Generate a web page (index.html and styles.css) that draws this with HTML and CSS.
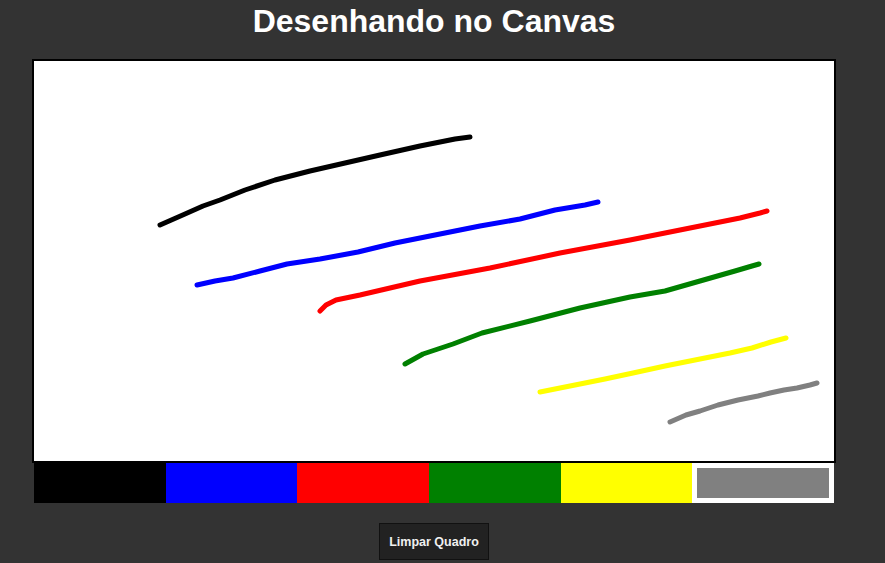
FILE: index.html
```html
<!DOCTYPE html>
<html lang="pt">
<head>
<meta charset="utf-8">
<title>Desenhando no Canvas</title>
<link rel="stylesheet" href="styles.css">
</head>
<body>
<div class="page">
  <h1 class="title">Desenhando no Canvas</h1>
  <div class="board">
    <svg class="drawing" width="800" height="400" viewBox="34 61 800 400">
      <g fill="none" stroke-width="5" stroke-linecap="round" stroke-linejoin="round">
        <polyline stroke="#000000" points="160,225 185,214 203,206 220,200 245,190 275,180 310,171 345,163 380,155 420,146 455,139 470,137"/>
        <polyline stroke="#0000ff" points="197,285 215,281 233,278 260,271 287,264 320,259 358,252 395,243 430,236 460,230 480,226 520,219 555,210 585,205 598,202"/>
        <polyline stroke="#ff0000" points="320,311 326,305 336,300 360,295 420,281 490,268 560,253 630,240 680,230 740,218 760,213 767,211"/>
        <polyline stroke="#008000" points="405,364 423,354 453,344 482,333 530,321 580,308 630,297 665,291 700,281 735,271 752,266 759,264"/>
        <polyline stroke="#ffff00" points="540,392 575,385 605,379 633,373 665,366 700,359 730,353 752,348 771,342 786,338"/>
        <polyline stroke="#808080" points="670,422 686,415 700,411 718,405 738,400 758,396 770,393 784,390 797,388 810,385 817,383"/>
      </g>
    </svg>
  </div>
  <div class="palette">
    <div class="swatch black"></div>
    <div class="swatch blue"></div>
    <div class="swatch red"></div>
    <div class="swatch green"></div>
    <div class="swatch yellow"></div>
    <div class="swatch gray selected"></div>
  </div>
  <button class="clear" type="button">Limpar Quadro</button>
</div>
</body>
</html>
```

FILE: styles.css
```css
html, body {
  margin: 0;
  padding: 0;
  background: #333333;
}

body {
  font-family: "Liberation Sans", Arial, sans-serif;
  overflow: hidden;
}

.page {
  width: 868px;
  display: flex;
  flex-direction: column;
  align-items: center;
}

.title {
  margin: 3px 0 19px;
  font-size: 32px;
  line-height: 37px;
  font-weight: bold;
  color: #ffffff;
}

.board {
  width: 800px;
  height: 400px;
  border: 2px solid #000000;
  background: #ffffff;
}

.drawing {
  display: block;
}

.palette {
  width: 800px;
  height: 40px;
  display: flex;
}

.swatch {
  flex: 1 1 0;
}

.swatch.selected {
  border: 5px solid #ffffff;
}

.black { background: #000000; }
.blue { background: #0000ff; }
.red { background: #ff0000; }
.green { background: #008000; }
.yellow { background: #ffff00; }
.gray { background: #808080; }

.clear {
  margin-top: 20px;
  width: 110px;
  height: 37px;
  padding: 0;
  background: #222222;
  border: 1px solid #111111;
  color: #f0f0f0;
  font-family: "Liberation Sans", Arial, sans-serif;
  font-size: 12.5px;
  font-weight: bold;
}
```
